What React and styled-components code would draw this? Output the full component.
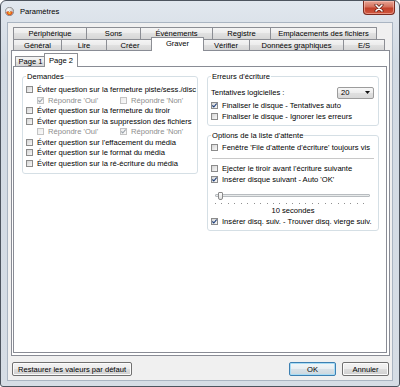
import React from 'react';
import styled, { createGlobalStyle, css } from 'styled-components';

const GlobalStyle = createGlobalStyle`
  html, body { margin: 0; padding: 0; background: #fff; }
  body {
    font-family: "Liberation Sans", Arial, sans-serif;
    font-size: 7.6px;
    color: #000;
  }
  * { box-sizing: border-box; }
`;

const Window = styled.div`
  width: 400px;
  height: 387px;
  display: flex;
  flex-direction: column;
  border: 1px solid #4d545e;
  border-radius: 6px 6px 3px 3px;
  background: linear-gradient(#e1e7ee, #d2dae3 60px, #d6dde5);
  overflow: hidden;
`;

const TitleBar = styled.div`
  height: 21px;
  flex: none;
  display: flex;
  align-items: center;
  padding-left: 4px;
`;

const Title = styled.span`
  margin-left: 6px;
  font-size: 7.6px;
  color: #000;
`;

const CloseButton = styled.div`
  margin-left: auto;
  margin-right: 4px;
  align-self: flex-start;
  width: 32px;
  height: 14px;
  display: flex;
  align-items: center;
  justify-content: center;
  border: 1px solid #7a2b20;
  border-top: none;
  border-radius: 0 0 4px 4px;
  background: linear-gradient(#e8a595, #d4705c 45%, #c2412b 55%, #d0573e);
  box-shadow: inset 0 0 0 1px rgba(255, 210, 200, 0.5);
`;

const Client = styled.div`
  flex: 1;
  margin: 0 6px 5px;
  border: 1px solid #aab5c2;
  background: #f0f0f0;
  padding: 4px 2px 4px 3px;
  display: flex;
  flex-direction: column;
`;

const TabControl = styled.div`
  display: flex;
  flex-direction: column;
`;

const TabRow = styled.div`
  height: ${p => p.$h}px;
  display: flex;
  align-items: flex-start;
  padding-left: 2px;
`;

const Tab = styled.div`
  flex: none;
  width: ${p => p.$w}px;
  height: 100%;
  margin-left: -1px;
  display: flex;
  align-items: center;
  justify-content: center;
  white-space: nowrap;
  border: 1px solid #8c8e94;
  border-bottom: none;
  border-radius: 1px 1px 0 0;
  background: linear-gradient(#f4f4f4, #ececec 50%, #e1e1e1 50%, #d6d6d6);
  &:first-child { margin-left: 0; }
  ${p => p.$active && css`
    position: relative;
    z-index: 2;
    height: 14px;
    margin: -2px -1px 0 -3px;
    background: #fff;
    padding-bottom: 2px;
  `}
`;

const Panel = styled.div`
  height: 306px;
  border: 1px solid #898c95;
  background: #fff;
  padding: 0 2px 2px 1px;
  display: flex;
  flex-direction: column;
`;

const SubTabStrip = styled.div`
  height: 15px;
  flex: none;
  display: flex;
  align-items: flex-end;
  padding-left: 2px;
`;

const SubTab = styled(Tab)`
  height: 10px;
  ${p => p.$active && css`
    height: 14px;
    margin: 0 0 -1px -2px;
    padding-bottom: 1px;
  `}
`;

const SubPanel = styled.div`
  flex: 1;
  border: 1px solid #898c95;
  background: #fff;
  padding: 5px 0 0 8px;
`;

const Columns = styled.div`
  display: flex;
  align-items: flex-start;
  gap: 9px;
`;

const RightColumn = styled.div`
  display: flex;
  flex-direction: column;
  gap: 5px;
`;

const Group = styled.fieldset`
  margin: 0;
  min-width: 0;
  width: ${p => p.$w}px;
  border: 1px solid #d5dfe5;
  border-radius: 3px;
  padding: 0 3px ${p => p.$pb || 4}px 3px;
`;

const Legend = styled.legend`
  padding: 0 1px;
  line-height: 9px;
  font-size: 7.6px;
  color: #000;
`;

const List = styled.div`
  padding-top: ${p => p.$pt || 0}px;
  display: flex;
  flex-direction: column;
`;

const Row = styled.div`
  height: 10.5px;
  display: flex;
  align-items: center;
  gap: 4px;
  white-space: nowrap;
  padding-left: ${p => p.$indent || 0}px;
  margin-top: ${p => p.$mt || 0}px;
  color: ${p => (p.$disabled ? '#8d8d8d' : '#000')};
`;

const SubItem = styled.div`
  width: ${p => p.$w}px;
  display: flex;
  align-items: center;
  gap: 4px;
`;

const Box = styled.span`
  flex: none;
  width: 7px;
  height: 7px;
  display: flex;
  border: 1px solid ${p => (p.$disabled ? '#c3c3c3' : '#8b8b8b')};
  background: ${p => (p.$disabled
    ? 'linear-gradient(135deg, #ececec, #fafafa)'
    : 'linear-gradient(135deg, #d4d4d4, #f8f8f8)')};
`;

const TentRow = styled.div`
  height: 13px;
  margin-top: 5px;
  margin-bottom: 1.5px;
  display: flex;
  align-items: center;
  justify-content: space-between;
`;

const Select = styled.div`
  width: 37px;
  height: 12px;
  margin-right: 1px;
  display: flex;
  align-items: center;
  justify-content: space-between;
  padding: 0 3px 0 3px;
  border: 1px solid #9c9c9c;
  border-radius: 2px;
  background: linear-gradient(#f7f7f7, #ececec 50%, #e0e0e0 50%, #d8d8d8);
`;

const Separator = styled.div`
  height: 1px;
  margin: 5px 1px 4.5px;
  background: #c8c8c8;
`;

const SliderTrackArea = styled.div`
  position: relative;
  height: 12px;
  margin: 5px 5px 0 4px;
  display: flex;
  align-items: center;
`;

const Track = styled.div`
  flex: 1;
  height: 3px;
  border: 1px solid #b8bcc0;
  border-radius: 1px;
  background: #e7eaea;
`;

const Thumb = styled.div`
  position: absolute;
  left: 3px;
  top: 2px;
  width: 5px;
  height: 8px;
  border: 1px solid #8a8a8a;
  border-radius: 1px 1px 2px 2px;
  background: linear-gradient(#fdfdfd, #e2e2e2);
`;

const Ticks = styled.div`
  height: 1px;
  margin: 1px 5px 2px 4px;
  background: repeating-linear-gradient(to right, #8f8f8f 0 1px, transparent 1px 6.45px);
`;

const SliderLabel = styled.div`
  height: 9px;
  line-height: 9px;
  text-align: center;
`;

const ButtonBar = styled.div`
  margin-top: 6px;
  padding: 0 1px;
  display: flex;
  gap: 6px;
`;

const Button = styled.button`
  width: ${p => p.$w}px;
  height: 14px;
  padding: 0;
  font: inherit;
  color: #000;
  border: 1px solid #707070;
  border-radius: 2px;
  background: linear-gradient(#f3f3f3, #ebebeb 50%, #dddddd 50%, #d0d0d0);
  box-shadow: inset 0 0 0 1px #fbfbfb;
  ${p => p.$default && css`
    margin-left: auto;
    border-color: #3c7fb1;
    box-shadow: inset 0 0 0 1px #a8dcf5;
    background: linear-gradient(#f2f6f8, #e8eef2 50%, #d9e2e8 50%, #ccd7de);
  `}
`;

const AppIcon = () => (
  <svg width="9" height="9" viewBox="0 0 9 9">
    <defs>
      <radialGradient id="disc" cx="0.4" cy="0.35" r="0.7">
        <stop offset="0" stopColor="#ffffff" />
        <stop offset="1" stopColor="#a9a9a9" />
      </radialGradient>
    </defs>
    <circle cx="4.5" cy="4.5" r="4.2" fill="url(#disc)" stroke="#6e6e6e" strokeWidth="0.6" />
    <path d="M1.2 5 Q4.5 3 7.8 5 Q7 8.2 4.5 8.3 Q2 8.2 1.2 5 Z" fill="#e2541c" />
    <path d="M2.6 5.6 Q4.5 4.6 6.4 5.6 Q5.6 7.2 4.5 7.2 Q3.4 7.2 2.6 5.6 Z" fill="#f7b52a" />
    <circle cx="4.5" cy="4.5" r="0.8" fill="#fff" stroke="#888" strokeWidth="0.3" />
  </svg>
);

const CloseGlyph = () => (
  <svg width="10" height="8" viewBox="0 0 10 8">
    <path d="M2 1 L8 7 M8 1 L2 7" stroke="#5b1a10" strokeWidth="3" strokeLinecap="round" />
    <path d="M2 1 L8 7 M8 1 L2 7" stroke="#fff" strokeWidth="1.6" strokeLinecap="round" />
  </svg>
);

const Check = ({ checked, disabled }) => (
  <Box $disabled={disabled}>
    {checked && (
      <svg width="5" height="5" viewBox="0 0 5 5">
        <path
          d="M0.4 2.5 L1.8 4 L4.6 0.5"
          fill="none"
          stroke={disabled ? '#9aa2ab' : '#1f3f7a'}
          strokeWidth="1.1"
        />
      </svg>
    )}
  </Box>
);

const Option = ({ label, checked, disabled, mt }) => (
  <Row $disabled={disabled} $mt={mt}>
    <Check checked={checked} disabled={disabled} />
    <span>{label}</span>
  </Row>
);

const AnswerRow = ({ yes, no }) => (
  <Row $indent={11} $disabled>
    <SubItem $w={79}>
      <Check checked={yes} disabled />
      <span>Répondre 'Oui'</span>
    </SubItem>
    <SubItem $w={70}>
      <Check checked={no} disabled />
      <span>Répondre 'Non'</span>
    </SubItem>
  </Row>
);

const ArrowDown = () => (
  <svg width="5" height="3" viewBox="0 0 5 3">
    <path d="M0 0 H5 L2.5 3 Z" fill="#111" />
  </svg>
);

const topTabs = [
  ['Périphérique', 74],
  ['Sons', 55],
  ['Événements', 73],
  ['Registre', 59],
  ['Emplacements des fichiers', 107],
];

const mainTabs = [
  ['Général', 49],
  ['Lire', 46],
  ['Créer', 48],
  ['Graver', 53, true],
  ['Vérifier', 48],
  ['Données graphiques', 95],
  ['E/S', 42],
];

export default function App() {
  return (
    <>
      <GlobalStyle />
      <Window>
        <TitleBar>
          <AppIcon />
          <Title>Paramètres</Title>
          <CloseButton>
            <CloseGlyph />
          </CloseButton>
        </TitleBar>
        <Client>
          <TabControl>
            <TabRow $h={12}>
              {topTabs.map(([t, w]) => (
                <Tab key={t} $w={w}>{t}</Tab>
              ))}
            </TabRow>
            <TabRow $h={11}>
              {mainTabs.map(([t, w, active]) => (
                <Tab key={t} $w={w} $active={active}>{t}</Tab>
              ))}
            </TabRow>
            <Panel>
              <SubTabStrip>
                <SubTab $w={31}>Page 1</SubTab>
                <SubTab $w={34} $active>Page 2</SubTab>
              </SubTabStrip>
              <SubPanel>
                <Columns>
                  <Group $w={176}>
                    <Legend>Demandes</Legend>
                    <List $pt={3.5}>
                      <Option label="Éviter question sur la fermeture piste/sess./disc" />
                      <AnswerRow yes />
                      <Option label="Éviter question sur la fermeture du tiroir" />
                      <Option label="Éviter question sur la suppression des fichiers" />
                      <AnswerRow no />
                      <Option label="Éviter question sur l'effacement du média" />
                      <Option label="Éviter question sur le format du média" />
                      <Option label="Éviter question sur la ré-écriture du média" />
                    </List>
                  </Group>
                  <RightColumn>
                    <Group $w={172} $pb={3.5}>
                      <Legend>Erreurs d'écriture</Legend>
                      <TentRow>
                        <span>Tentatives logicielles :</span>
                        <Select>
                          <span>20</span>
                          <ArrowDown />
                        </Select>
                      </TentRow>
                      <List>
                        <Option label="Finaliser le disque - Tentatives auto" checked />
                        <Option label="Finaliser le disque - Ignorer les erreurs" />
                      </List>
                    </Group>
                    <Group $w={172} $pb={3}>
                      <Legend>Options de la liste d'attente</Legend>
                      <List $pt={2.5}>
                        <Option label="Fenêtre 'File d'attente d'écriture' toujours vis" />
                        <Separator />
                        <Option label="Ejecter le tiroir avant l'écriture suivante" />
                        <Option label="Insérer disque suivant - Auto 'OK'" checked />
                        <SliderTrackArea>
                          <Track />
                          <Thumb />
                        </SliderTrackArea>
                        <Ticks />
                        <SliderLabel>10 secondes</SliderLabel>
                        <Option
                          label="Insérer disq. suiv. - Trouver disq. vierge suiv."
                          checked
                          mt={2}
                        />
                      </List>
                    </Group>
                  </RightColumn>
                </Columns>
              </SubPanel>
            </Panel>
          </TabControl>
          <ButtonBar>
            <Button $w={120}>Restaurer les valeurs par défaut</Button>
            <Button $w={47} $default>OK</Button>
            <Button $w={47}>Annuler</Button>
          </ButtonBar>
        </Client>
      </Window>
    </>
  );
}
